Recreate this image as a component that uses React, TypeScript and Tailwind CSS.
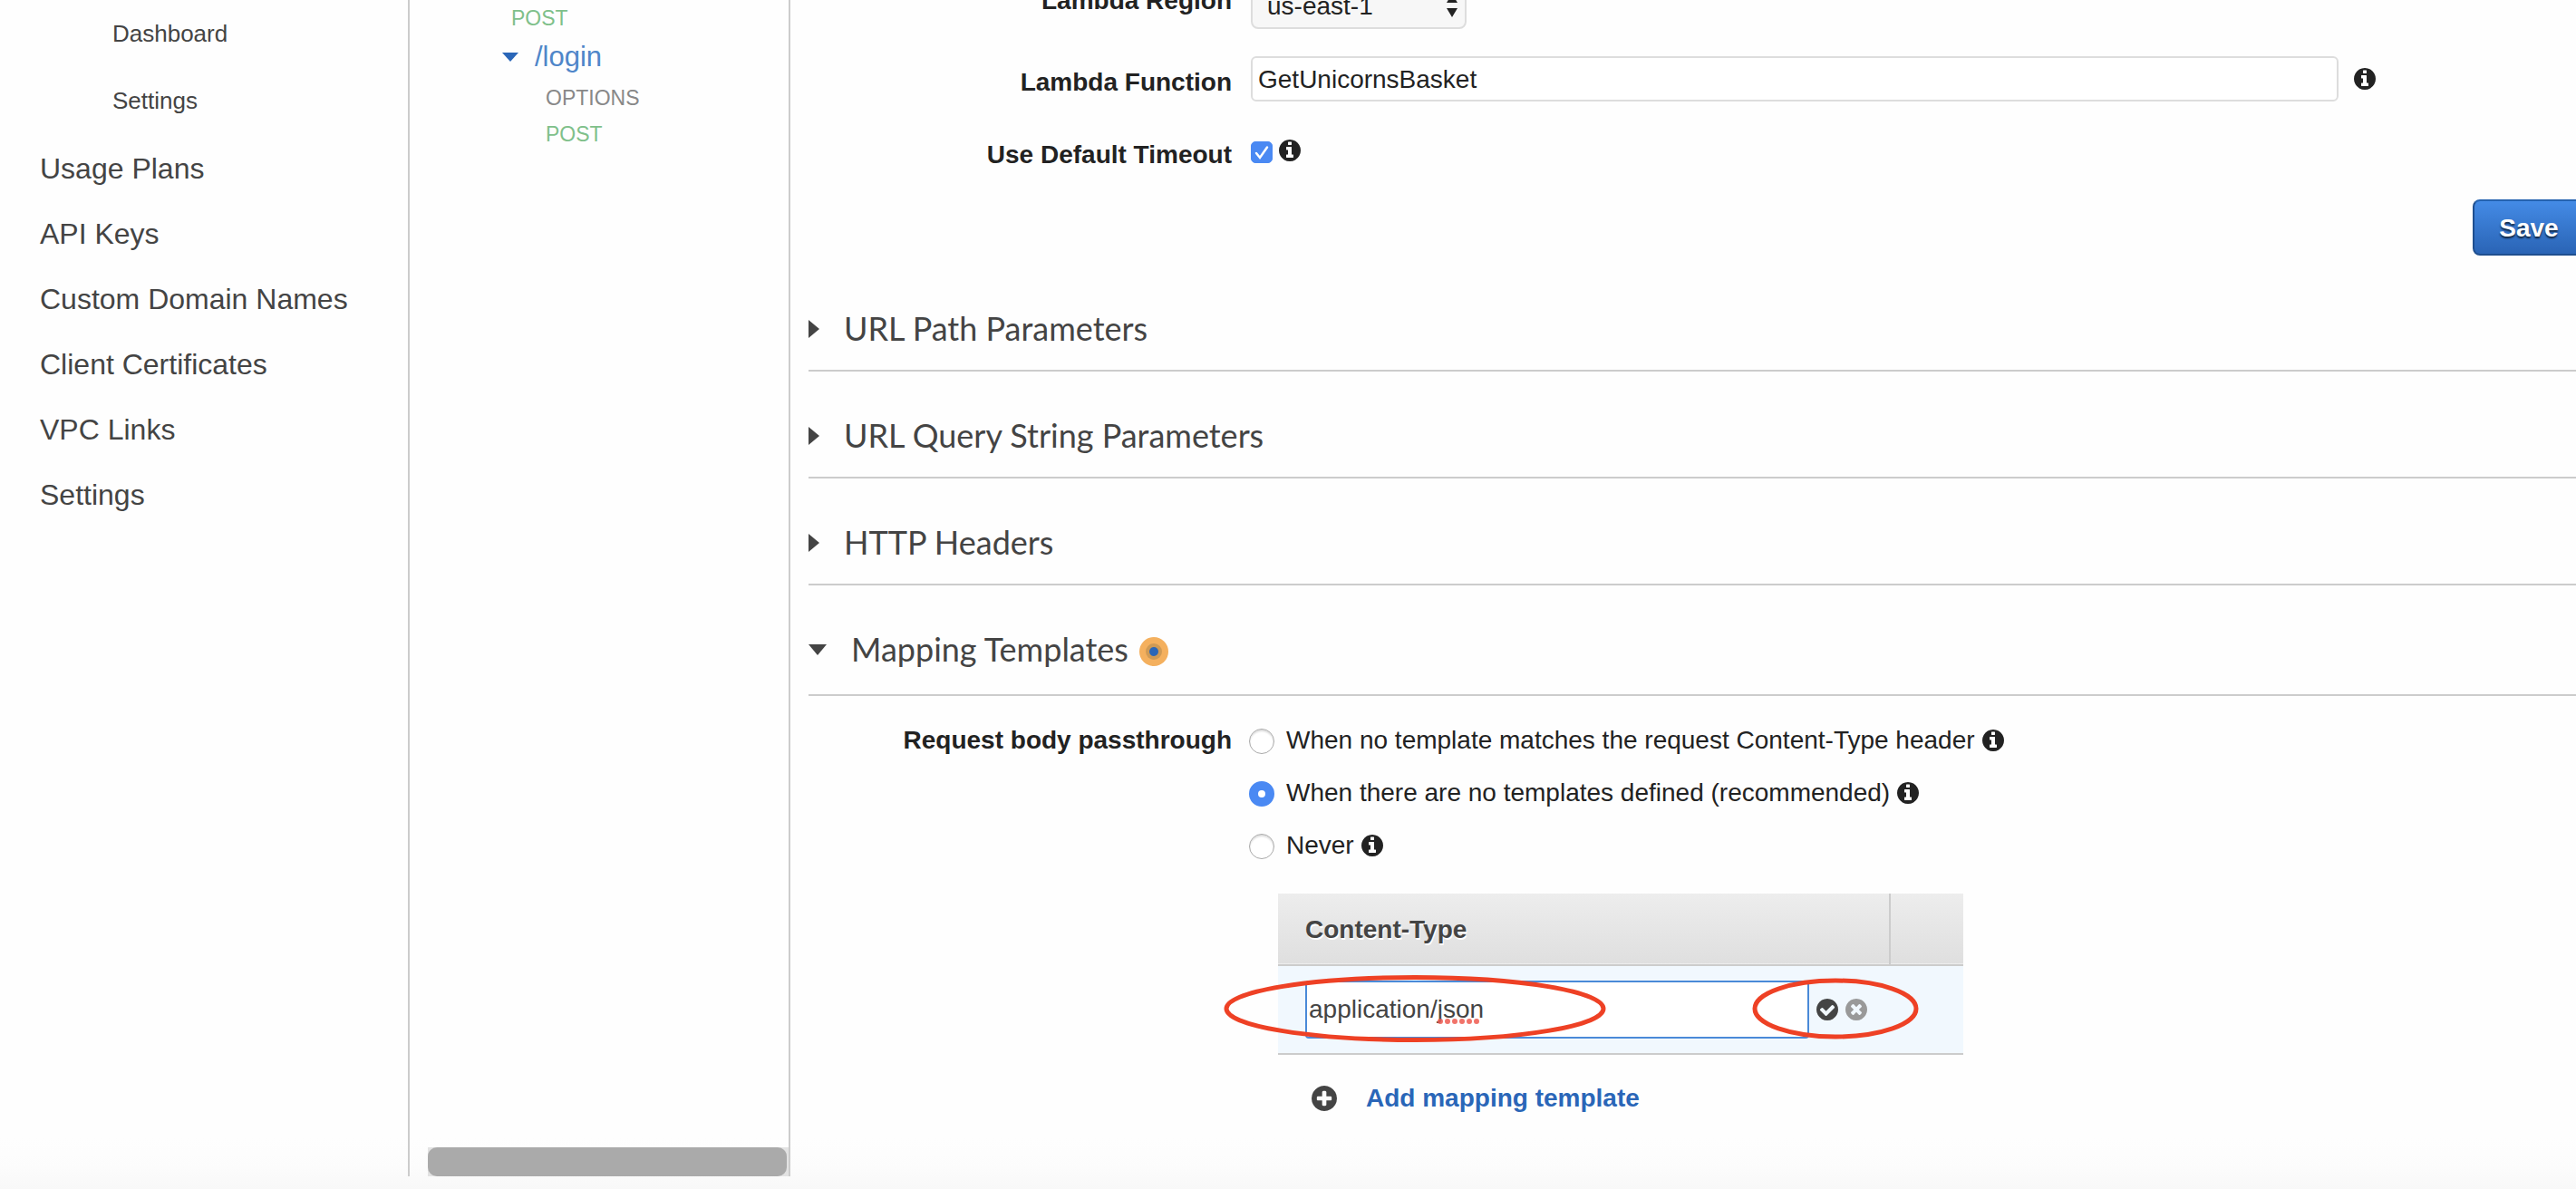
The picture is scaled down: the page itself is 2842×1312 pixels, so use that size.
import { useState } from "react";
import type { ReactNode } from "react";

const DISC =
  "M1664 896q0 209-103 385.5t-279.5 279.5-385.5 103-385.5-103-279.5-279.5-103-385.5 103-385.5 279.5-279.5 385.5-103 385.5 103 279.5 279.5 103 385.5z";

const GLYPHS = {
  info: "M1152 1376v-160q0-14-9-23t-23-9h-96v-512q0-14-9-23t-23-9h-320q-14 0-23 9t-9 23v160q0 14 9 23t23 9h96v320h-96q-14 0-23 9t-9 23v160q0 14 9 23t23 9h448q14 0 23-9t9-23zM1024 480v-160q0-14-9-23t-23-9h-192q-14 0-23 9t-9 23v160q0 14 9 23t23 9h192q14 0 23-9t9-23z",
  plus: "M1344 960v-128q0-26-19-45t-45-19h-256v-256q0-26-19-45t-45-19h-128q-26 0-45 19t-19 45v256h-256q-26 0-45 19t-19 45v128q0 26 19 45t45 19h256v256q0 26 19 45t45 19h128q26 0 45-19t19-45v-256h256q26 0 45-19t19-45z",
  check:
    "M1412 734q0-28-18-46l-91-90q-19-19-45-19t-45 19l-408 407-226-226q-19-19-45-19t-45 19l-91 90q-18 18-18 46 0 27 18 45l362 362q19 19 45 19 27 0 46-19l543-543q18-18 18-45z",
  times:
    "M1277 1122q0-26-19-45l-181-181 181-181q19-19 19-45 0-27-19-46l-90-90q-19-19-46-19-26 0-45 19l-181 181-181-181q-19-19-45-19-27 0-46 19l-90 90q-19 19-19 46 0 26 19 45l181 181-181 181q-19 19-19 45 0 27 19 46l90 90q19 19 46 19 26 0 45-19l181-181 181 181q19 19 45 19 27 0 46-19l90-90q19-19 19-46z",
};

function DiscIcon({ glyph, className }: { glyph: keyof typeof GLYPHS; className: string }) {
  return (
    <svg viewBox="128 128 1536 1536" fill="currentColor" fillRule="evenodd" aria-hidden="true" className={className}>
      <path d={DISC + GLYPHS[glyph]} />
    </svg>
  );
}

function Info() {
  return <DiscIcon glyph="info" className="size-6 shrink-0 text-[#222]" />;
}

function Sidebar() {
  return (
    <nav className="w-[452px] shrink-0 border-r-2 border-[#ccc] text-[#444]">
      <ul className="pl-[124px] text-[26px] leading-[74px]">
        {["Dashboard", "Settings"].map((t) => (
          <li key={t}>
            <a href="#">{t}</a>
          </li>
        ))}
      </ul>
      <ul className="mt-0.5 pl-11 text-[32px] leading-[72px]">
        {["Usage Plans", "API Keys", "Custom Domain Names", "Client Certificates", "VPC Links", "Settings"].map((t) => (
          <li key={t}>
            <a href="#">{t}</a>
          </li>
        ))}
      </ul>
    </nav>
  );
}

function ResourceTree() {
  return (
    <aside className="flex w-[420px] shrink-0 flex-col justify-between border-r-2 border-[#ccc] pl-5">
      <div className="pl-[82px] text-[23px] leading-10">
        <a href="#" className="ml-[10px] block text-[#7fc08a]">
          POST
        </a>
        <a href="#" className="mt-0.5 flex items-center gap-[18px] text-[31px] leading-[42px] text-[#4f86c9]">
          <svg viewBox="0 0 18 10" className="h-[10px] w-[18px] text-[#2a66b8]" fill="currentColor" aria-hidden="true">
            <path d="M0 0h18L9 10z" />
          </svg>
          /login
        </a>
        <a href="#" className="mt-1 ml-12 block text-[#888]">
          OPTIONS
        </a>
        <a href="#" className="ml-12 block text-[#7fc08a]">
          POST
        </a>
      </div>
      <div className="h-8 bg-[#e2e2e2] pr-0.5">
        <div className="h-full rounded-[10px] bg-[#aaa]" />
      </div>
    </aside>
  );
}

function SectionTitle({ title, open, badge }: { title: string; open?: boolean; badge?: ReactNode }) {
  return (
    <h2
      className={
        open
          ? "border-b-2 border-[#ccc] pt-12 pb-7 font-[Lato,sans-serif]"
          : "border-b-2 border-[#ccc] pt-12 pb-6 font-[Lato,sans-serif]"
      }
    >
      <button type="button" aria-expanded={!!open} className="flex items-center text-4xl leading-[44px] text-[#444]">
        {open ? (
          <svg viewBox="0 0 20 12" className="mt-0.5 mr-[27px] h-3 w-5" fill="currentColor" aria-hidden="true">
            <path d="M0 0h20L10 12z" />
          </svg>
        ) : (
          <svg viewBox="0 0 12 20" className="mt-0.5 mr-[27px] h-5 w-3" fill="currentColor" aria-hidden="true">
            <path d="M0 0l12 10L0 20z" />
          </svg>
        )}
        {title}
        {badge}
      </button>
    </h2>
  );
}

function Badge() {
  return (
    <svg viewBox="0 0 32 32" className="mt-1.5 ml-3 size-8" aria-hidden="true">
      <circle cx="16" cy="16" r="16" fill="#f4b05e" />
      <circle cx="16" cy="16" r="9" fill="#cf9a55" />
      <circle cx="16" cy="16" r="5" fill="#2a66b8" />
    </svg>
  );
}

const PASSTHROUGH = [
  "When no template matches the request Content-Type header",
  "When there are no templates defined (recommended)",
  "Never",
];

function TemplateTable() {
  const [type, setType] = useState("application/json");
  return (
    <div className="relative w-[756px]">
      <table className="w-full table-fixed border-collapse text-left text-[#444]">
        <thead>
          <tr className="h-[79px] border-b-2 border-[#ccc] bg-linear-to-b from-[#ededed] to-[#dfdfdf]">
            <th
              scope="col"
              className="w-[675px] border-r-2 border-[#ccc] pt-0.5 pl-[30px] font-bold [text-shadow:1px_2px_0_#fff]"
            >
              Content-Type
            </th>
            <td />
          </tr>
        </thead>
        <tbody>
          <tr className="h-[98px] border-b-2 border-[#ccc] bg-[#f1f8fe]">
            <td colSpan={2} className="p-0 pl-[30px]">
              <div className="flex items-center">
                <div className="relative">
                  <input
                    aria-label="Content-Type"
                    spellCheck={false}
                    value={type}
                    onChange={(e) => setType(e.target.value)}
                    className="block h-16 w-[556px] rounded border-2 border-[#4a8ad8] bg-white px-0.5 outline-none"
                  />
                  <svg viewBox="0 0 46 6" className="absolute top-[42px] left-[146px] h-[6px] w-[46px]" aria-hidden="true">
                    {[3, 11, 19, 27, 35, 43].map((x) => (
                      <circle key={x} cx={x} cy="3" r="3" fill="#ee5b50" fillOpacity="0.85" />
                    ))}
                  </svg>
                </div>
                <button type="button" aria-label="Confirm" className="ml-2">
                  <DiscIcon glyph="check" className="size-6" />
                </button>
                <button type="button" aria-label="Cancel" className="ml-2 text-[#999]">
                  <DiscIcon glyph="times" className="size-6" />
                </button>
              </div>
            </td>
          </tr>
        </tbody>
      </table>
      <svg
        className="pointer-events-none absolute inset-0 size-full overflow-visible"
        fill="none"
        stroke="#ee4125"
        strokeWidth="5"
        aria-hidden="true"
      >
        <ellipse cx="151" cy="127" rx="208" ry="34.5" />
        <ellipse cx="615" cy="127" rx="89" ry="31" />
      </svg>
    </div>
  );
}

export default function App() {
  const [mode, setMode] = useState(1);
  const [timeout, setDefaultTimeout] = useState(true);
  const [fn, setFn] = useState("GetUnicornsBasket");

  return (
    <div className="flex min-h-screen overflow-hidden bg-[linear-gradient(to_top,#f8f8f8,#fcfcfc_24px,#fefefe_56px)] pb-[14px] font-['Liberation_Sans',Arial,sans-serif]">
      <Sidebar />
      <ResourceTree />
      <main className="min-w-0 flex-1 pl-5 text-[28px] leading-9 text-[#222]">
        <form className="-mt-[18px]" onSubmit={(e) => e.preventDefault()}>
          <div className="grid grid-cols-[467px_1fr] gap-x-[21px]">
            <label htmlFor="region" className="pt-px text-right font-bold">
              Lambda Region
            </label>
            <div className="relative w-[238px]">
              <select
                id="region"
                className="block h-[50px] w-full appearance-none rounded-lg border-2 border-[#ddd] bg-[#f7f7f7] pl-4"
              >
                <option>us-east-1</option>
              </select>
              <svg
                viewBox="0 0 12 26"
                className="pointer-events-none absolute top-[11px] right-[10px] h-[26px] w-3"
                fill="currentColor"
                aria-hidden="true"
              >
                <path d="M0 10L6 0l6 10zM0 16h12L6 26z" />
              </svg>
            </div>

            <label htmlFor="fn" className="pt-[41px] text-right font-bold">
              Lambda Function
            </label>
            <div className="mt-[30px] flex items-center gap-[17px] pr-[221px]">
              <input
                id="fn"
                value={fn}
                onChange={(e) => setFn(e.target.value)}
                className="h-[50px] min-w-0 flex-1 rounded-md border-2 border-[#ddd] bg-white px-1.5 pt-0.5 outline-none"
              />
              <Info />
            </div>

            <label htmlFor="timeout" className="pt-[41px] text-right font-bold">
              Use Default Timeout
            </label>
            <div className="mt-9 flex h-9 items-center gap-[7px]">
              <span className="relative mt-1 size-6">
                <input
                  id="timeout"
                  type="checkbox"
                  checked={timeout}
                  onChange={(e) => setDefaultTimeout(e.target.checked)}
                  className="peer block size-6 appearance-none rounded-[5px] border border-[#bbb] bg-white checked:border-[#4a89f3] checked:bg-[#4a89f3]"
                />
                <svg
                  viewBox="0 0 24 24"
                  className="pointer-events-none absolute inset-0 hidden size-6 peer-checked:block"
                  fill="none"
                  stroke="#fff"
                  strokeWidth="2.5"
                  strokeLinecap="round"
                  aria-hidden="true"
                >
                  <path d="M6 13l4 5L18 6.500" />
                </svg>
              </span>
              <Info />
            </div>
          </div>

          <div className="-mr-[10px] mt-[31px] flex justify-end">
            <button
              type="submit"
              className="h-[62px] w-[124px] rounded-lg border-2 border-[#1f4f8f] border-t-[#2563b0] bg-linear-to-b from-[#448be6] to-[#2a64b5] pt-0.5 font-bold text-white [text-shadow:0_2px_2px_rgba(0,0,0,0.7)]"
            >
              Save
            </button>
          </div>
        </form>

        <div className="pt-[10px]">
          <SectionTitle title="URL Path Parameters" />
          <SectionTitle title="URL Query String Parameters" />
          <SectionTitle title="HTTP Headers" />
          <SectionTitle title="Mapping Templates" open badge={<Badge />} />
        </div>

        <fieldset className="grid grid-cols-[467px_1fr] gap-x-[19px] pt-[31px]">
          <div id="passthrough" className="text-right font-bold">
            Request body passthrough
          </div>
          <div role="radiogroup" aria-labelledby="passthrough" className="flex flex-col gap-[22px]">
            {PASSTHROUGH.map((text, i) => (
              <div key={text} className="flex items-center">
                <label className="flex items-center gap-[13px]">
                  <input
                    type="radio"
                    name="passthrough"
                    checked={mode === i}
                    onChange={() => setMode(i)}
                    className="mt-0.5 size-7 appearance-none rounded-full border border-[#aaa] bg-white shadow-[inset_0_2px_2px_#ddd] checked:border-[10px] checked:border-[#4a89f3] checked:shadow-none"
                  />
                  {text}
                </label>
                <span className="ml-2">
                  <Info />
                </span>
              </div>
            ))}
          </div>
        </fieldset>

        <div className="mt-[35px] pl-[518px]">
          <TemplateTable />
          <a href="#" className="mt-[30px] flex items-center pl-[37px] font-bold text-[#2a66b8]">
            <DiscIcon glyph="plus" className="mr-8 size-7 text-[#444]" />
            Add mapping template
          </a>
        </div>
      </main>
    </div>
  );
}
